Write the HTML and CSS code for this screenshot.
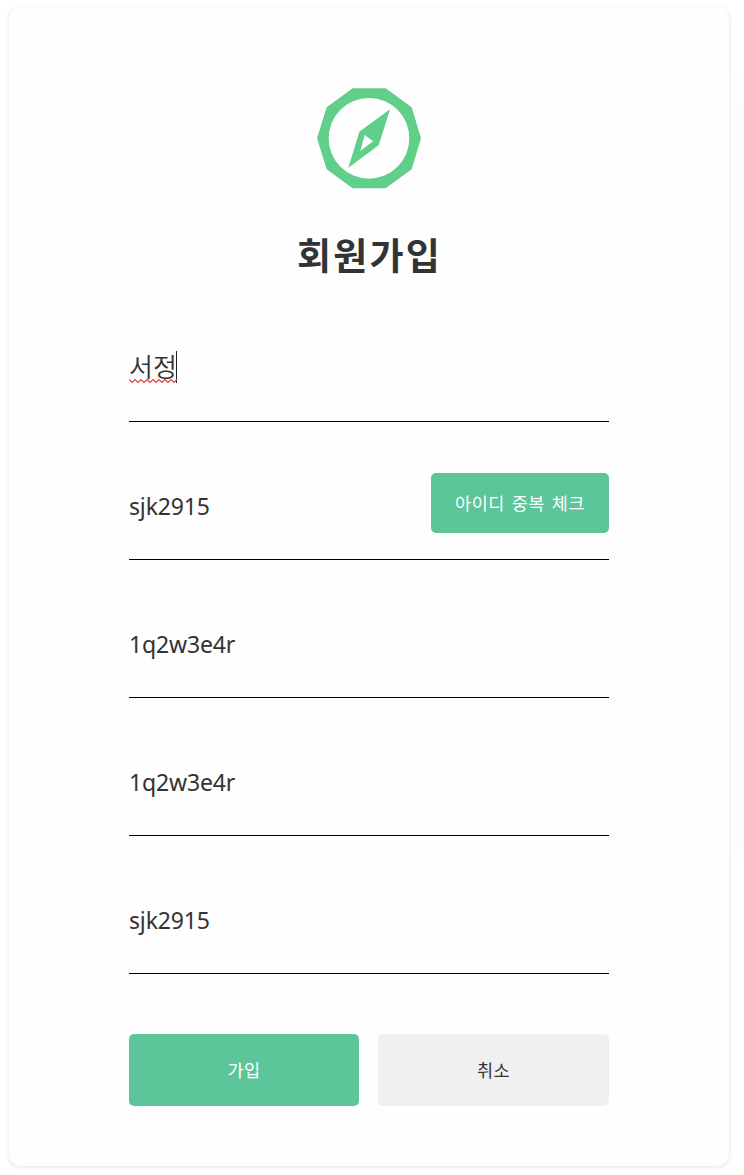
FILE: index.html
```html
<!DOCTYPE html>
<html lang="ko">
<head>
<meta charset="utf-8">
<title>회원가입</title>
<link rel="stylesheet" href="styles.css">
</head>
<body>
<main class="card">
  <svg class="logo" viewBox="0 0 420 375" aria-hidden="true">
    <path class="logo-shape" fill-rule="evenodd" d="M158 40H257L335 97L363 190L335 283L257 340H158L80 283L51 190L80 97ZM86 190a121 121 0 1 0 242 0a121 121 0 1 0-242 0Z"/>
    <path class="logo-shape" fill-rule="evenodd" d="M270 103L236 211L145 278L178 170ZM194 180L181 228L219 199Z"/>
  </svg>
  <h1 class="title">회원가입</h1>
  <form class="form">
    <div class="field field-name"><span class="value active">서정<svg class="spelling" viewBox="0 0 48 6" aria-hidden="true"><path d="M0 1.5L3 4.5L6 1.5L9 4.5L12 1.5L15 4.5L18 1.5L21 4.5L24 1.5L27 4.5L30 1.5L33 4.5L36 1.5L39 4.5L42 1.5L45 4.5L48 1.5"/></svg></span></div>
    <div class="field"><span class="value">sjk2915</span><button class="button check" type="button">아이디 중복 체크</button></div>
    <div class="field"><span class="value">1q2w3e4r</span></div>
    <div class="field"><span class="value">1q2w3e4r</span></div>
    <div class="field"><span class="value">sjk2915</span></div>
    <div class="actions">
      <button class="button join" type="button">가입</button>
      <button class="button cancel" type="button">취소</button>
    </div>
  </form>
</main>
<div class="side-shadow"></div>
</body>
</html>
```
FILE: styles.css
```css
* { box-sizing: border-box; }
body {
  margin: 0;
  height: 1175px;
  padding: 7px 15px 9px 9px;
  background: #fff;
  color: #333;
  font-family: "Noto Sans", "Noto Sans CJK KR", sans-serif;
  position: relative;
  overflow: hidden;
}
.card {
  position: relative;
  z-index: 1;
  width: 720px;
  height: 1159px;
  padding: 68px 120px 0;
  border-radius: 12px;
  background: #fefefe;
  box-shadow: 0 1px 4px rgba(0, 0, 0, .12);
}
.logo { display: block; width: 140px; height: 125px; margin-left: 171px; }
.logo-shape { fill: #60cf89; }
.title {
  margin: 24px 0 0;
  height: 60px;
  font: 700 37px/60px "Noto Sans CJK KR", sans-serif;
  letter-spacing: 2.2px;
  text-indent: 1px;
  text-align: center;
}
.form { display: block; }
.field {
  display: flex;
  justify-content: space-between;
  height: 138px;
  padding-top: 66px;
  border-bottom: 1px solid #000;
}
.value {
  height: 34px;
  font-size: 23px;
  line-height: 36px;
  letter-spacing: -.15px;
  white-space: nowrap;
}
.active {
  position: relative;
  width: 48px;
  height: 32px;
  border-right: 1px solid #222;
  font: 350 26px/30px "Noto Sans CJK KR", sans-serif;
  letter-spacing: 0;
}
.field-name { padding-top: 67px; }
.spelling { position: absolute; left: 0; bottom: -1px; width: 48px; height: 6px; }
.spelling path { fill: none; stroke: #e5413b; stroke-width: 1.2; }
.button {
  padding: 0;
  border: 0;
  border-radius: 5px;
  font: 400 17.5px/24px "Noto Sans CJK KR", sans-serif;
  letter-spacing: .4px;
}
.check, .join { background: #5cc59a; color: #fff; }
.check {
  width: 178px;
  height: 60px;
  margin-top: -15px;
  letter-spacing: .5px;
  word-spacing: 1.4px;
}
.actions {
  display: grid;
  grid-template-columns: 230px 231px;
  justify-content: space-between;
  padding-top: 60px;
}
.join, .cancel { height: 72px; }
.cancel { background: #f0f0f0; color: #333; }
.side-shadow {
  position: absolute;
  left: 733px;
  top: 65px;
  width: 11px;
  height: 800px;
  background: linear-gradient(transparent, rgba(0, 0, 0, .012) 40px calc(100% - 20px), transparent);
}
```
